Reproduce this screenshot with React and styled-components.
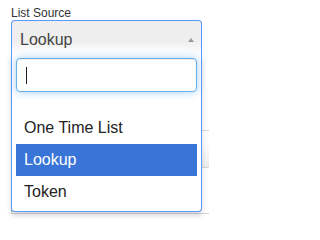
import React from "react";
import styled, { createGlobalStyle } from "styled-components";

const GlobalStyle = createGlobalStyle`
  html, body {
    margin: 0;
    padding: 0;
    background: #fff;
  }
  body {
    font-family: "Liberation Sans", Arial, sans-serif;
  }
`;

const Page = styled.div`
  width: 209px;
  height: 220px;
  overflow: hidden;
  position: relative;
`;

const Field = styled.div`
  display: flex;
  flex-direction: column;
  padding-left: 11px;
`;

const Label = styled.label`
  padding-top: 6px;
  font-size: 12px;
  line-height: 14px;
  color: #333;
`;

const Select = styled.div`
  position: relative;
  width: 191px;
  z-index: 2;
`;

const Single = styled.div`
  display: flex;
  align-items: flex-start;
  justify-content: space-between;
  box-sizing: border-box;
  height: 34px;
  padding: 4px 7px 0 8px;
  border: 1px solid #5897fb;
  border-bottom: 0;
  border-radius: 4px 4px 0 0;
  background: linear-gradient(#eee 60%, #fff 100%);
  font-size: 16px;
  line-height: 29px;
  color: #444;
`;

const Arrow = styled.span`
  margin-top: 13px;
  width: 0;
  height: 0;
  border-left: 3px solid transparent;
  border-right: 3px solid transparent;
  border-bottom: 4px solid #999;
`;

const Drop = styled.div`
  position: absolute;
  top: 100%;
  left: 0;
  right: 0;
  box-sizing: border-box;
  border: 1px solid #5897fb;
  border-top: 0;
  border-radius: 0 0 4px 4px;
  background: #fff;
  box-shadow: 0 4px 5px rgba(0, 0, 0, 0.15);
  padding: 4px 4px 3px 4px;
`;

const SearchBox = styled.div`
  display: flex;
  align-items: center;
  box-sizing: border-box;
  height: 34px;
  padding-left: 9px;
  border: 1px solid #66afe9;
  border-radius: 4px;
  box-shadow: inset 0 1px 1px rgba(0, 0, 0, 0.075),
    0 0 8px rgba(102, 175, 233, 0.6);
  background: #fff;
`;

const Caret = styled.span`
  width: 1px;
  height: 17px;
  background: #222;
`;

const Results = styled.ul`
  list-style: none;
  margin: 4px 0 0;
  padding: 0;
`;

const Option = styled.li`
  padding: 8px;
  min-height: 0;
  font-size: 16px;
  line-height: 16px;
  color: ${(p) => (p.$active ? "#fff" : "#222")};
  background: ${(p) => (p.$active ? "#3875d7" : "transparent")};
`;

const Underlay = styled.div`
  margin-left: 11px;
  width: 260px;
  padding-top: 76px;
  border-left: 1px solid #ccc;
`;

const UnderRow = styled.div`
  box-sizing: border-box;
  height: ${(p) => p.$h}px;
  border-top: ${(p) => (p.$top ? "1px solid #d6d6d6" : "0")};
  border-bottom: 1px solid #d6d6d6;
  background: ${(p) =>
    p.$shade ? "linear-gradient(#fff 30%, #ececec 100%)" : "#fff"};
`;

const options = ["", "One Time List", "Lookup", "Token"];

export default function App() {
  return (
    <Page>
      <GlobalStyle />
      <Field>
        <Label>List Source</Label>
        <Select>
          <Single>
            <span>Lookup</span>
            <Arrow />
          </Single>
          <Drop>
            <SearchBox>
              <Caret />
            </SearchBox>
            <Results>
              {options.map((o, i) => (
                <Option key={i} $active={o === "Lookup"}>
                  {o}
                </Option>
              ))}
            </Results>
          </Drop>
        </Select>
      </Field>
      <Underlay>
        <UnderRow $h={38} $top $shade />
        <UnderRow $h={46} />
      </Underlay>
    </Page>
  );
}
